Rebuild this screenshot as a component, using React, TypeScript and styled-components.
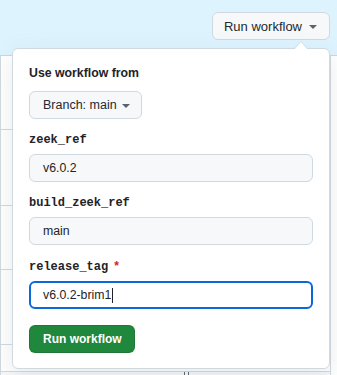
import React from 'react';
import styled, { createGlobalStyle } from 'styled-components';

const GlobalStyle = createGlobalStyle`
  html, body {
    margin: 0;
    padding: 0;
    background: #ffffff;
  }
  body {
    font-family: "Liberation Sans", Arial, sans-serif;
    color: #1f2328;
  }
`;

const Page = styled.div`
  width: 337px;
  height: 375px;
  overflow: hidden;
  display: flex;
  flex-direction: column;
  background: #ffffff;
`;

const Banner = styled.div`
  flex: none;
  height: 56px;
  box-sizing: border-box;
  background: #ddf4ff;
  border-bottom: 1px solid #b4dcff;
  display: flex;
  justify-content: flex-end;
  align-items: flex-start;
  padding: 12px 7px 0 0;
`;

const Dispatch = styled.div`
  position: relative;
`;

const Caret = styled.span<{ $gap?: number }>`
  display: inline-block;
  width: 0;
  height: 0;
  border-left: 4px solid transparent;
  border-right: 4px solid transparent;
  border-top: 4px solid #59636e;
  margin-left: ${(p) => p.$gap ?? 8}px;
  transform: translateY(1px);
`;

const GhostButton = styled.button<{ $size?: number; $pad?: string }>`
  display: inline-flex;
  align-items: center;
  box-sizing: border-box;
  height: 28px;
  padding: ${(p) => p.$pad ?? '0 12px'};
  font-family: inherit;
  font-size: ${(p) => p.$size ?? 12.5}px;
  font-weight: 400;
  color: #25292e;
  background: #f6f8fa;
  border: 1px solid #d1d9e0;
  border-radius: 6px;
  cursor: pointer;
  white-space: nowrap;
`;

const Popover = styled.div`
  position: absolute;
  top: calc(100% + 8px);
  right: 0;
  width: 318px;
  box-sizing: border-box;
  padding: 15px 16px 15px;
  background: #ffffff;
  border: 1px solid #d1d9e0;
  border-radius: 6px;
  box-shadow: 0 8px 24px rgba(140, 149, 159, 0.2);
  z-index: 2;

  &::before,
  &::after {
    content: '';
    position: absolute;
    right: 21px;
    width: 0;
    height: 0;
    border-left: 7px solid transparent;
    border-right: 7px solid transparent;
  }
  &::before {
    top: -8px;
    border-bottom: 8px solid #d1d9e0;
  }
  &::after {
    top: -7px;
    border-bottom: 8px solid #ffffff;
  }
`;

const Heading = styled.div`
  font-size: 12.3px;
  font-weight: 700;
  line-height: 18px;
`;

const BranchRow = styled.div`
  margin-top: 9px;
`;

const Field = styled.div`
  margin-top: 12px;
  display: flex;
  flex-direction: column;
  gap: 5px;
`;

const Label = styled.label`
  font-family: "Liberation Mono", "DejaVu Sans Mono", monospace;
  font-size: 12px;
  font-weight: 700;
  line-height: 18px;
  color: #1f2328;
`;

const Required = styled.span`
  color: #d1242f;
  margin-left: 6px;
  font-family: "Liberation Sans", Arial, sans-serif;
`;

const InputBox = styled.div<{ $focused?: boolean }>`
  display: flex;
  align-items: center;
  box-sizing: border-box;
  height: 28px;
  padding: 0 ${(p) => (p.$focused ? 12 : 13)}px;
  font-size: 12.3px;
  color: #1f2328;
  background: ${(p) => (p.$focused ? '#ffffff' : '#f6f8fa')};
  border: ${(p) => (p.$focused ? '2px solid #0969da' : '1px solid #d1d9e0')};
  border-radius: 6px;
`;

const Cursor = styled.span`
  display: inline-block;
  width: 1px;
  height: 15px;
  background: #1f2328;
  margin-left: 1px;
`;

const PrimaryButton = styled.button`
  margin-top: 16px;
  height: 28px;
  box-sizing: border-box;
  padding: 0 12px 0 13px;
  font-family: inherit;
  font-size: 12px;
  font-weight: 700;
  color: #ffffff;
  background: #1f883d;
  border: 1px solid rgba(31, 35, 40, 0.15);
  border-radius: 6px;
  cursor: pointer;
`;

const List = styled.div`
  flex: 1;
  width: 331px;
  box-sizing: border-box;
  border-left: 1px solid #d1d9e0;
  border-right: 1px solid #d1d9e0;
  display: flex;
  flex-direction: column;
`;

const Row = styled.div<{ $h: number }>`
  flex: none;
  height: ${(p) => p.$h}px;
  border-bottom: 1px solid #d1d9e0;
`;

const Footer = styled.div`
  flex: 1;
  background: #f6f8fa;
  display: flex;
  justify-content: center;
  align-items: flex-end;
  gap: 3px;
  padding-left: 42px;
`;

const Grip = styled.span`
  width: 1px;
  height: 4px;
  background: #59636e;
`;

const rows = [73, 75, 63, 74, 26];

const fields = [
  { name: 'zeek_ref', value: 'v6.0.2' },
  { name: 'build_zeek_ref', value: 'main' },
  { name: 'release_tag', value: 'v6.0.2-brim1', required: true, focused: true },
];

export default function App() {
  return (
    <>
      <GlobalStyle />
      <Page>
        <Banner>
          <Dispatch>
            <GhostButton $size={13} $pad="0 12px 0 11px">
              Run workflow
              <Caret $gap={7} />
            </GhostButton>
            <Popover>
              <Heading>Use workflow from</Heading>
              <BranchRow>
                <GhostButton $pad="0 11px 0 13px">
                  Branch: main
                  <Caret $gap={5} />
                </GhostButton>
              </BranchRow>
              {fields.map((f) => (
                <Field key={f.name}>
                  <Label>
                    {f.name}
                    {f.required && <Required>*</Required>}
                  </Label>
                  <InputBox $focused={f.focused}>
                    {f.value}
                    {f.focused && <Cursor />}
                  </InputBox>
                </Field>
              ))}
              <PrimaryButton>Run workflow</PrimaryButton>
            </Popover>
          </Dispatch>
        </Banner>
        <List>
          {rows.map((h, i) => (
            <Row key={i} $h={h} />
          ))}
          <Footer>
            <Grip />
            <Grip />
          </Footer>
        </List>
      </Page>
    </>
  );
}
